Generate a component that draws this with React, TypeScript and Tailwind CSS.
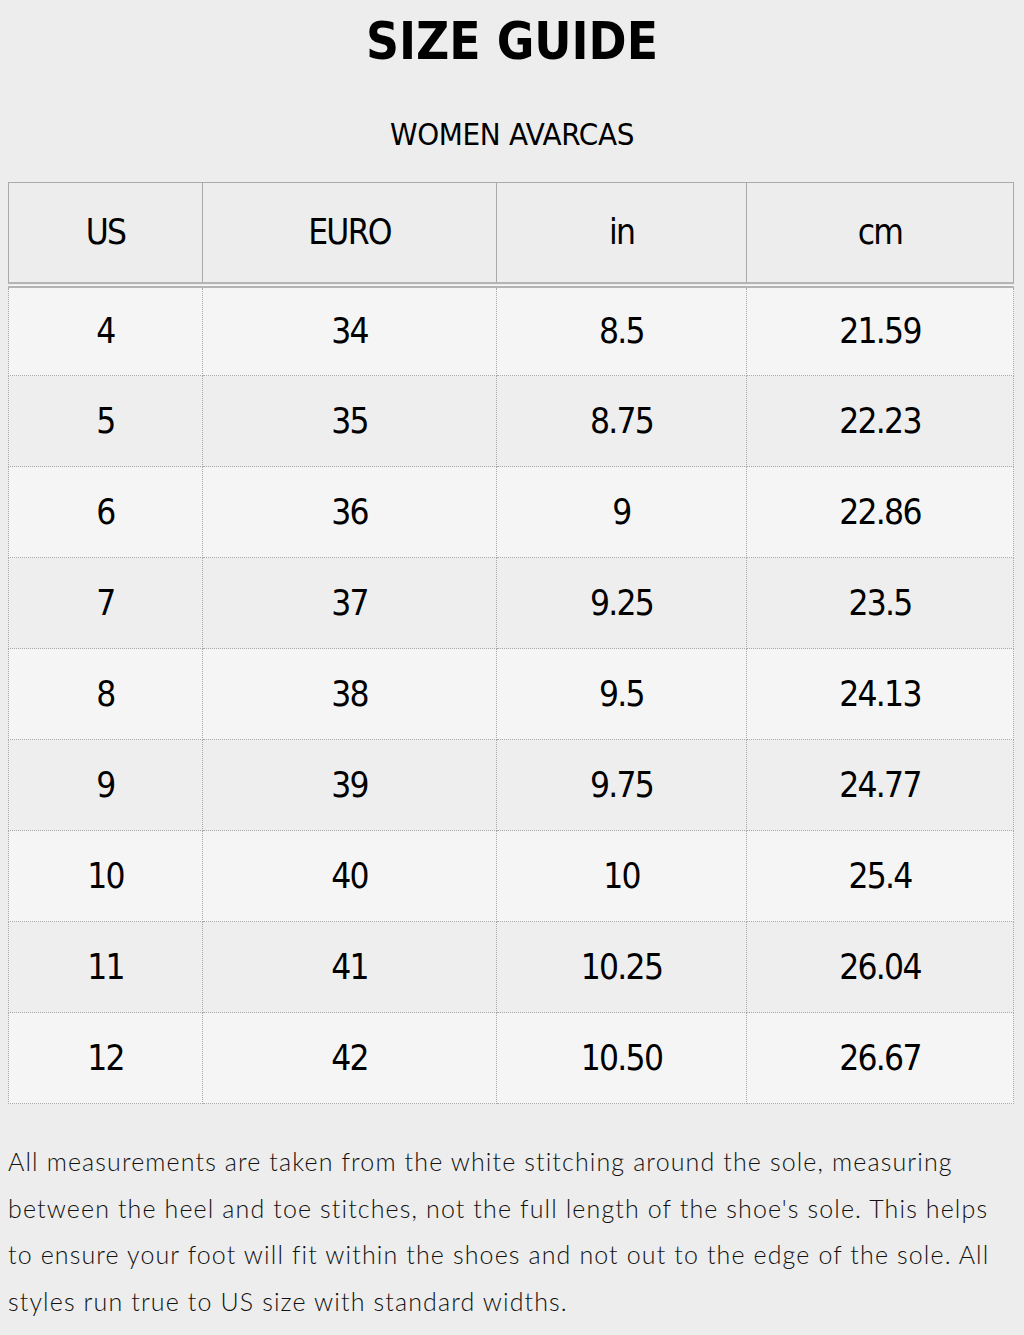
const rows = [
  ['4', '34', '8.5', '21.59'],
  ['5', '35', '8.75', '22.23'],
  ['6', '36', '9', '22.86'],
  ['7', '37', '9.25', '23.5'],
  ['8', '38', '9.5', '24.13'],
  ['9', '39', '9.75', '24.77'],
  ['10', '40', '10', '25.4'],
  ['11', '41', '10.25', '26.04'],
  ['12', '42', '10.50', '26.67'],
]

const cell = 'border border-dotted border-[#a9a9a9] text-center align-middle'

const lines = [
  'All measurements are taken from the white stitching around the sole, measuring',
  "between the heel and toe stitches, not the full length of the shoe's sole. This helps",
  'to ensure your foot will fit within the shoes and not out to the edge of the sole. All',
  'styles run true to US size with standard widths.',
]

export default function App() {
  return (
    <div className="min-h-[1335px] bg-[#ededed] px-2 text-black">
      <h1 className="pt-[14px] text-center font-['DejaVu_Sans_Condensed',sans-serif] text-[51px] font-bold leading-[56px]">
        SIZE GUIDE
      </h1>
      <h2 className="mt-[46px] text-center font-['DejaVu_Sans_Condensed',sans-serif] text-[31px] leading-[36px] tracking-[-0.01em]">
        WOMEN AVARCAS
      </h2>

      <table className="mt-[30px] w-[1005px] table-fixed border-collapse font-['DejaVu_Sans_Condensed',sans-serif] text-[35px] tracking-[-0.05em]">
        <colgroup>
          <col className="w-[194px]" />
          <col className="w-[294px]" />
          <col className="w-[250px]" />
          <col className="w-[267px]" />
        </colgroup>
        <thead>
          <tr className="h-[102px] bg-[#ededed]">
            {['US', 'EURO', 'in', 'cm'].map((h) => (
              <th key={h} className={`${cell} border-b-[6px] border-double border-b-[#b4b4b4] pt-0 font-normal`}>
                {h}
              </th>
            ))}
          </tr>
        </thead>
        <tbody>
          {rows.map((r, i) => (
            <tr key={r[0]} className={`h-[91px] ${i % 2 === 0 ? 'bg-[#f5f5f5]' : 'bg-[#eeeeee]'}`}>
              {r.map((v, j) => (
                <td key={j} className={cell}>
                  {v}
                </td>
              ))}
            </tr>
          ))}
        </tbody>
      </table>

      <div className="mt-[34px] font-['Lato',sans-serif] text-[25px] font-light leading-[46.5px] tracking-[0.045em] text-[#111]">
        {lines.map((l) => (
          <p key={l} className="whitespace-nowrap">
            {l}
          </p>
        ))}
      </div>
    </div>
  )
}
